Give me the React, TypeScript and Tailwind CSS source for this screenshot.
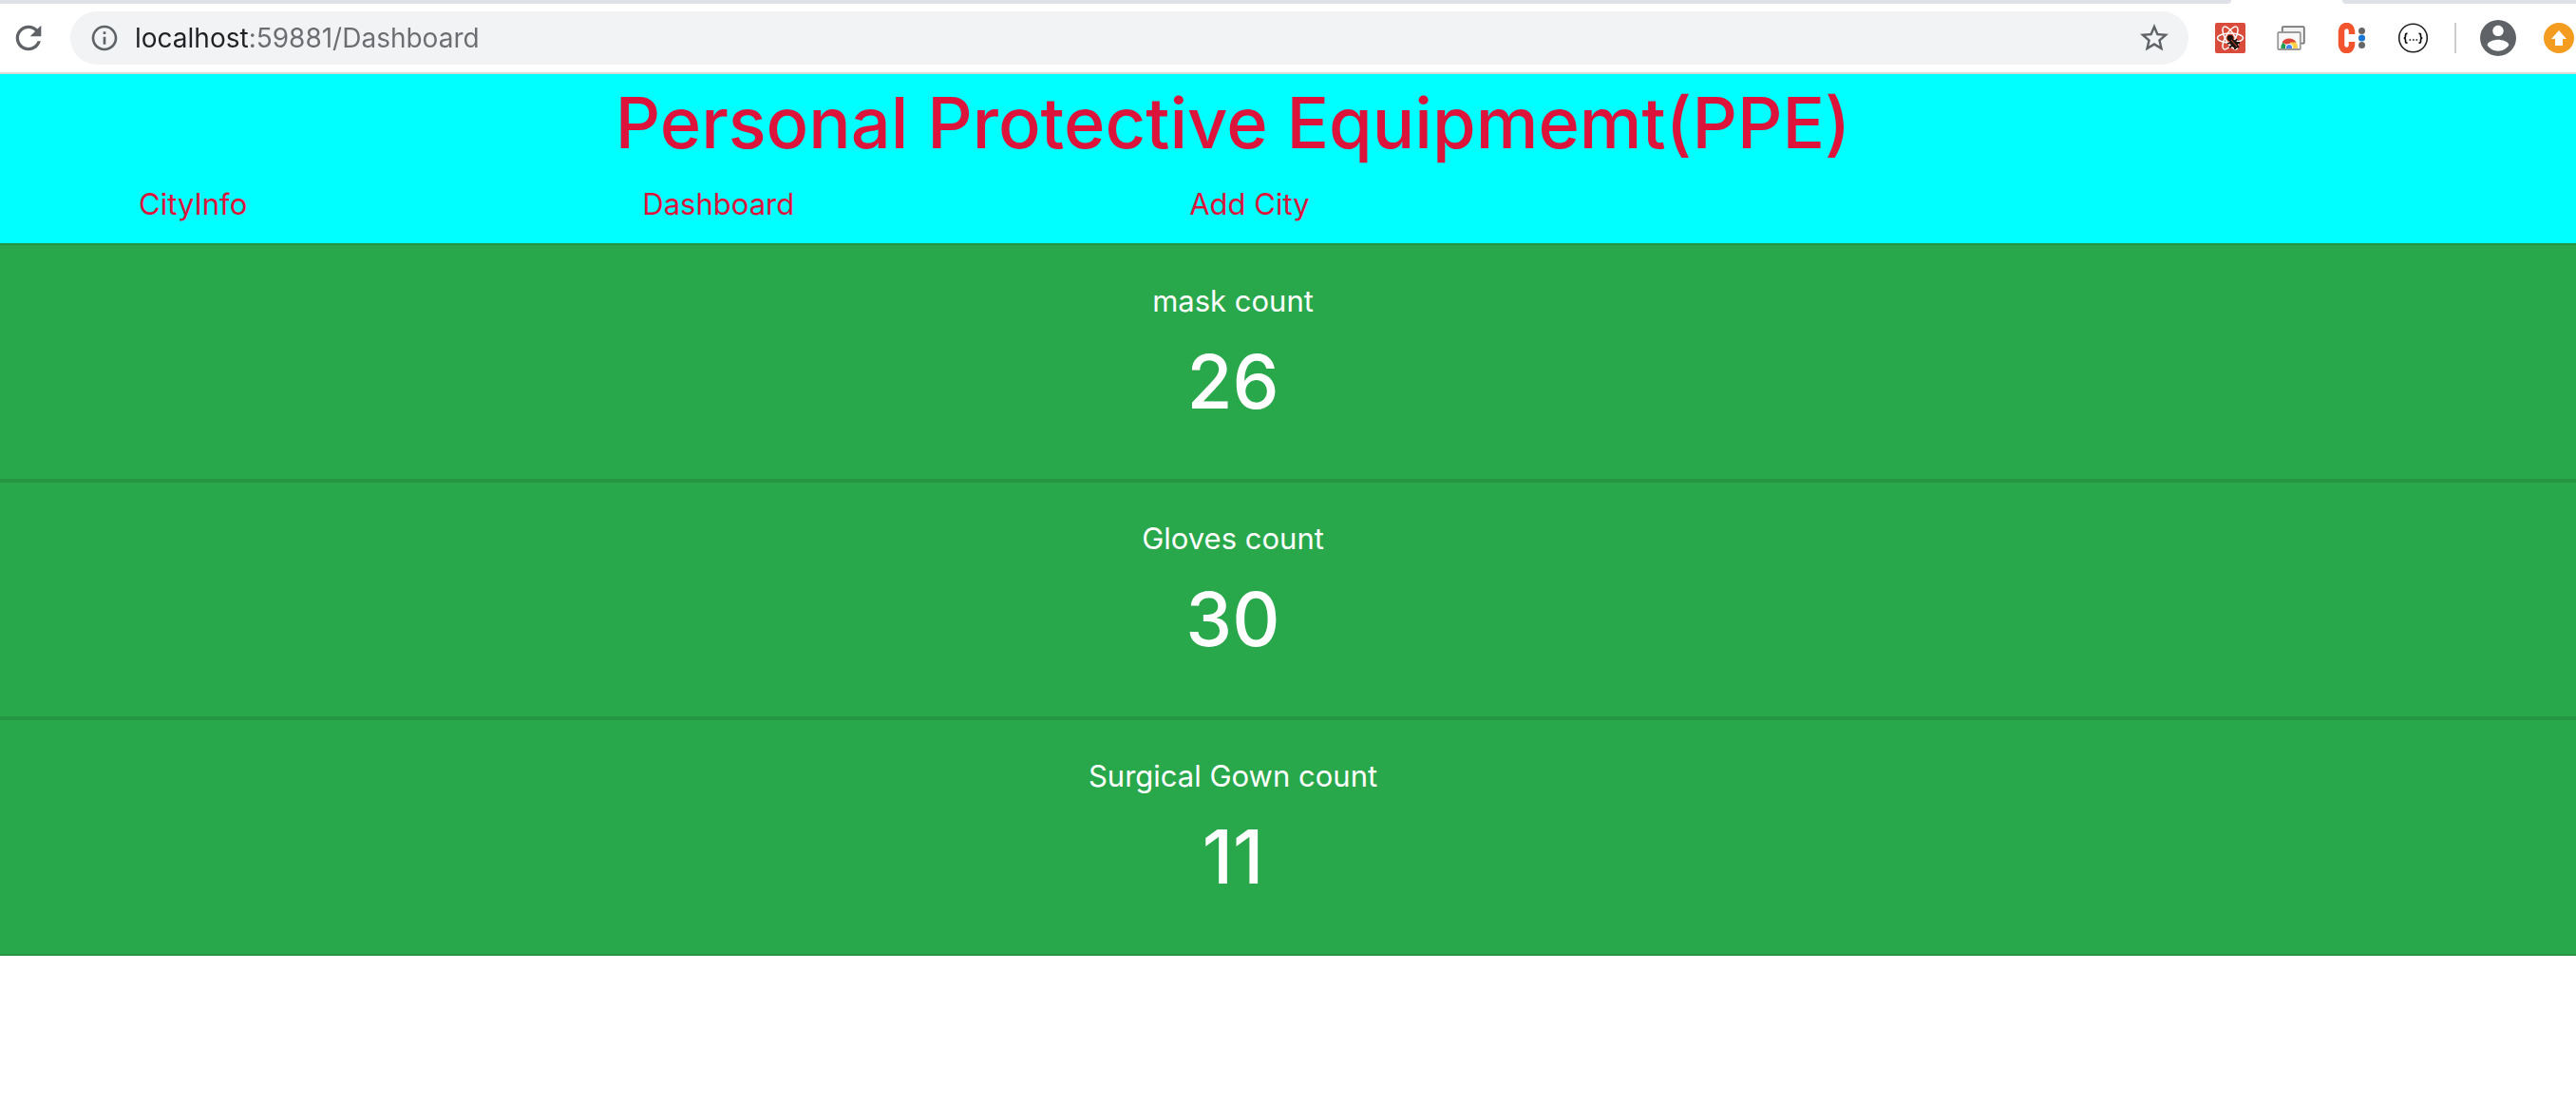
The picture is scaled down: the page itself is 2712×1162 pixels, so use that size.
import React from "react";

const counts = [
  { label: "mask count", value: 26 },
  { label: "Gloves count", value: 30 },
  { label: "Surgical Gown count", value: 11 },
];

const links = [
  { label: "CityInfo", href: "#cityinfo" },
  { label: "Dashboard", href: "#dashboard" },
  { label: "Add City", href: "#addcity" },
];

function ReactDebugIcon() {
  return (
    <svg viewBox="0 0 32 32" className="size-8">
      <rect width="32" height="32" rx="2" fill="#d94b3a" />
      <g fill="none" stroke="#fff" strokeWidth="1.5">
        <ellipse cx="16" cy="16" rx="13.5" ry="5" />
        <ellipse cx="16" cy="16" rx="13.5" ry="5" transform="rotate(60 16 16)" />
        <ellipse cx="16" cy="16" rx="13.5" ry="5" transform="rotate(120 16 16)" />
      </g>
      <g fill="#1c1512" stroke="#1c1512">
        <circle cx="16" cy="16" r="2.8" />
        <ellipse cx="20" cy="22" rx="3.4" ry="5.6" transform="rotate(-42 20 22)" stroke="none" />
        <path d="M13 22l5-2M15 26l4-3M21 28v-4M25 26l-3-3M26 21l-4 0M23 17l-2 3" strokeWidth="1.8" fill="none" />
      </g>
      <path d="M17 18l6 7" stroke="#d94b3a" strokeWidth="1" />
    </svg>
  );
}

function ScreensIcon() {
  return (
    <svg viewBox="0 0 32 32" className="size-8">
      <rect x="6.8" y="4.2" width="23" height="17.5" rx="1" fill="#f2f2f2" stroke="#757575" strokeWidth="1.8" />
      <rect x="2.2" y="10" width="23.6" height="18" rx="1" fill="#f7f7f7" stroke="#9a9a9a" strokeWidth="1.8" />
      <path d="M5.5 27a8.5 8.5 0 0 1 2-6.500L14 27z" fill="#1fa055" />
      <path d="M6.5 20.5a9 9 0 0 1 15 0L14 24z" fill="#dc4437" />
      <path d="M15 20.5h6.5A9 9 0 0 1 22.7 27H14z" fill="#fdd04a" />
      <path d="M10 27v-1a4 4 0 0 1 8 0v1z" fill="#fff" />
      <path d="M11 27v-1a3 3 0 0 1 6 0v1z" fill="#4285f4" />
    </svg>
  );
}

function CIcon() {
  return (
    <svg viewBox="0 0 32 32" className="size-8">
      <path
        d="M16 12V9a5.500 6 0 0 0-11 0v14a5.500 6 0 0 0 11 0V20"
        fill="none"
        stroke="#f2542d"
        strokeWidth="6.500"
      />
      <circle cx="26.500" cy="8.500" r="3.500" fill="#666" />
      <circle cx="26.500" cy="16" r="3.500" fill="#1976d2" />
      <circle cx="26.500" cy="23.500" r="3.500" fill="#666" />
    </svg>
  );
}

function BracesIcon() {
  return (
    <svg viewBox="0 0 32 32" className="size-8">
      <circle cx="16.500" cy="16" r="14.800" fill="#fff" stroke="#222" strokeWidth="1.600" />
      <g fill="none" stroke="#111" strokeWidth="1.700">
        <path d="M10.500 11.300h-.8q-1.200 0-1.200 1.400v1.600q0 1.700-1.700 1.900q1.700.2 1.700 1.900v1.600q0 1.400 1.200 1.400h.8" />
        <path d="M22.500 11.300h.8q1.200 0 1.200 1.400v1.600q0 1.700 1.700 1.900q-1.700.2-1.700 1.900v1.600q0 1.400-1.200 1.400h-.8" />
      </g>
      <path d="M12.500 18h1.600M16 18h1.600M19.500 18h1.600" stroke="#111" strokeWidth="1.500" />
    </svg>
  );
}

function AvatarIcon() {
  return (
    <svg viewBox="2 2 20 20" className="size-[38px]" fill="#5f6368">
      <path d="M12 2C6.480 2 2 6.480 2 12s4.480 10 10 10 10-4.480 10-10S17.520 2 12 2zm0 3c1.660 0 3 1.340 3 3s-1.340 3-3 3-3-1.340-3-3 1.340-3 3-3zm0 14.200c-2.500 0-4.710-1.280-6-3.220.03-1.990 4-3.080 6-3.080 1.990 0 5.970 1.090 6 3.080-1.290 1.940-3.500 3.220-6 3.220z" />
    </svg>
  );
}

function Toolbar() {
  return (
    <div className="border-b-2 border-[#dcdcdc] bg-white">
      <div className="flex h-1">
        <div className="grow rounded-br-full bg-[#dee1e6]" />
        <div className="w-[117px] bg-white" />
        <div className="w-[246px] rounded-bl-full bg-[#dee1e6]" />
      </div>
      <div className="flex h-[72px] items-center pr-0.5 pl-2.5">
        <button type="button" aria-label="Reload" className="mr-6 shrink-0">
          <svg viewBox="0 0 24 24" className="size-10" fill="#5f6368">
            <path d="M17.650 6.350C16.200 4.900 14.210 4 12 4c-4.420 0-7.990 3.580-7.990 8s3.570 8 7.990 8c3.730 0 6.840-2.550 7.730-6h-2.080c-.82 2.330-3.040 4-5.650 4-3.310 0-6-2.690-6-6s2.690-6 6-6c1.660 0 3.140.69 4.220 1.780L13 11h7V4z" />
          </svg>
        </button>
        <div className="flex h-14 grow items-center gap-4 rounded-full bg-[#f1f3f4] pr-[18px] pl-5">
          <button type="button" aria-label="Site information" className="shrink-0">
            <svg viewBox="0 0 24 24" className="size-8" fill="#5f6368">
              <path d="M11 17h2v-6h-2zm0-8h2V7h-2zm1-7C6.480 2 2 6.480 2 12s4.480 10 10 10 10-4.480 10-10S17.520 2 12 2zm0 18c-4.410 0-8-3.590-8-8s3.590-8 8-8 8 3.590 8 8-3.590 8-8 8z" />
            </svg>
          </button>
          <input
            type="text"
            aria-label="Address"
            defaultValue="localhost:59881/Dashboard"
            className="min-w-0 grow bg-[linear-gradient(to_right,#202124_120px,#6b6d70_120px)] bg-clip-text text-[28px] leading-10 text-transparent outline-none"
          />
          <button type="button" aria-label="Bookmark" className="shrink-0">
            <svg viewBox="0 0 24 24" className="size-9" fill="#5f6368">
              <path d="M22 9.240l-7.190-.62L12 2 9.190 8.630 2 9.240l5.460 4.730L5.820 21 12 17.270 18.180 21l-1.630-7.030L22 9.240zM12 15.400l-3.760 2.270 1-4.280-3.320-2.880 4.380-.38L12 6.100l1.710 4.040 4.380.38-3.320 2.880 1 4.280L12 15.400z" />
            </svg>
          </button>
        </div>
        <div className="ml-7 flex shrink-0 items-center gap-8">
          <button type="button" aria-label="React debugger"><ReactDebugIcon /></button>
          <button type="button" aria-label="Screens"><ScreensIcon /></button>
          <button type="button" aria-label="C extension"><CIcon /></button>
          <button type="button" aria-label="JSON viewer"><BracesIcon /></button>
        </div>
        <div className="mr-[25px] ml-7 h-8 w-0.5 shrink-0 bg-[#cccccc]" />
        <button type="button" aria-label="Profile" className="shrink-0"><AvatarIcon /></button>
        <button type="button" aria-label="Update" className="ml-[29px] shrink-0">
          <svg viewBox="0 0 32 32" className="size-8">
            <circle cx="16" cy="16" r="16" fill="#f39c1f" />
            <path d="M16 8l8 9h-4v7h-8v-7H8z" fill="#fff" />
          </svg>
        </button>
      </div>
    </div>
  );
}

export default function App() {
  return (
    <div className="min-h-screen bg-white font-['Inter',sans-serif]">
      <Toolbar />
      <header className="bg-[#00ffff] pb-[17px] text-[#dc143c]">
        <h1 className="pr-[116px] text-center text-[74px] leading-[102px] font-medium">
          Personal Protective Equipmemt(PPE)
        </h1>
        <nav className="mt-[11px] flex gap-[416px] pl-[146px] text-[31px] leading-[48px]">
          {links.map((link) => (
            <a key={link.label} href={link.href}>{link.label}</a>
          ))}
        </nav>
      </header>
      <main>
        {counts.map((item) => (
          <section
            key={item.label}
            className="border-2 border-x-0 border-[#259443] bg-[#28a74b] pt-[35px] pr-[116px] pb-[54px] text-center text-white"
          >
            <p className="text-[31px] leading-[48px]">{item.label}</p>
            <p className="mt-[13px] text-[78px] leading-[96px] font-medium">{item.value}</p>
          </section>
        ))}
      </main>
    </div>
  );
}
